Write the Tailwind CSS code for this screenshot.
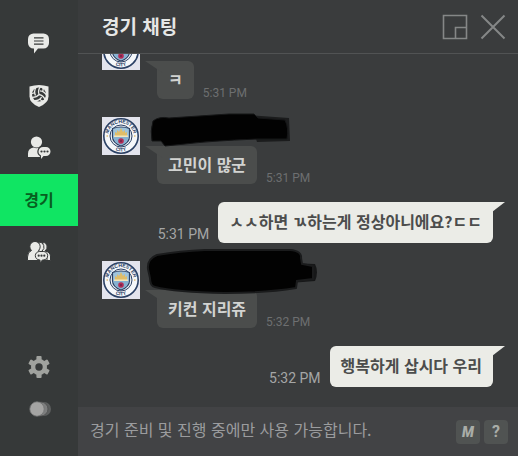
<!DOCTYPE html>
<html lang="ko">
<head>
  <meta charset="UTF-8" />
  <meta name="viewport" content="width=device-width, initial-scale=1.0"/>
  <title>경기 채팅</title>
  <script src="https://cdn.jsdelivr.net/npm/@tailwindcss/browser@4"></script>
</head>
<body class="h-screen flex overflow-hidden bg-[#3a3c3d] font-['Noto_Sans_CJK_KR',sans-serif] text-base">

  <!-- 공용 심볼 -->
  <svg class="hidden" aria-hidden="true">
    <defs>
      <path id="crestTop" d="M6.2 19a12.8 12.8 0 0 1 25.6 0" />
      <path id="crestBottom" d="M3.6 19a15.4 15.4 0 0 0 30.8 0" />
      <symbol id="crest" viewBox="0 0 38 38">
        <rect width="38" height="38" fill="#e3e4ed" />
        <circle cx="19" cy="19" r="17.2" fill="#f5f7fa" stroke="#2b4165" stroke-width="1.6" />
        <circle cx="19" cy="19" r="11" fill="#f2f5f8" stroke="#2b4165" stroke-width="1" />
        <text font-size="5" font-weight="700" fill="#2b4165" text-anchor="middle" font-family="Liberation Sans"><textPath href="#crestTop" startOffset="50%">MANCHESTER</textPath></text>
        <text font-size="5" font-weight="700" fill="#2b4165" text-anchor="middle" font-family="Liberation Sans"><textPath href="#crestBottom" startOffset="50%">CITY</textPath></text>
        <path d="M10.500 11.500q8.500-3 17 0v8q0 6.500-8.500 9.500q-8.500-3-8.500-9.500z" fill="#9fc4dc" stroke="#2b4165" stroke-width="1.200" />
        <path d="M11.500 20h15q0 5-7.500 8q-7.500-3-7.500-8z" fill="#86b1d1" />
        <path d="M13 19v-4l2 1v-3l2 2l2-4l2 4l2-2v3l2-1v4z" fill="#e0bd68" />
        <path d="M12 18.500h14v1.500h-14z" fill="#f3e6bd" />
        <circle cx="19" cy="24" r="2.800" fill="#b12c55" />
        <circle cx="19" cy="24" r="1" fill="#6e2348" />
        <circle cx="5.200" cy="19" r=".8" fill="#d6ac4b" />
        <circle cx="32.800" cy="19" r=".8" fill="#d6ac4b" />
      </symbol>
    </defs>
  </svg>

  <!-- 사이드 메뉴 -->
  <nav class="w-[78px] shrink-0 flex flex-col justify-between bg-[#363939] pt-[18px] pb-[26px] text-[#e9eae7]">
    <div class="flex flex-col">
      <button class="h-[52px] flex items-center justify-center" aria-label="전체 채팅">
        <svg class="size-6" viewBox="0 0 24 24">
          <path d="M6.500 1.500h10a5.500 5.500 0 0 1 5.500 5.500v4a5.500 5.500 0 0 1-5.500 5.500h-5.500l-4 5v-5h-.5a5.500 5.500 0 0 1-5.500-5.500V7a5.500 5.500 0 0 1 5.500-5.500z" fill="currentColor" />
          <path d="M7 5.800h9.500M7 9h9.500M7 12.200h9.500" stroke="#363939" stroke-width="1.200" />
        </svg>
      </button>
      <button class="h-[52px] flex items-center justify-center" aria-label="클럽 채팅">
        <svg class="size-6" viewBox="0 0 24 24">
          <path d="M2.500 2.500q9.500-3 19 0v10q0 6.500-9.500 10.500q-9.500-4-9.500-10.500z" fill="currentColor" />
          <circle cx="12" cy="10.500" r="7" fill="#363939" />
          <g fill="none" stroke="currentColor" stroke-width="1.300">
            <path d="M12 10.500q-1.500-4 1.500-8M8.500 11.500q-2-4 .5-8M15.500 7.500q1-1.500.500-4" />
            <path d="M12 10.500q-1.500-4 1.500-8M8.500 11.500q-2-4 .5-8M15.500 7.500q1-1.500.500-4" transform="rotate(120 12 10.500)" />
            <path d="M12 10.500q-1.500-4 1.500-8M8.500 11.500q-2-4 .5-8M15.500 7.500q1-1.500.500-4" transform="rotate(240 12 10.500)" />
          </g>
        </svg>
      </button>
      <button class="h-[52px] flex items-center justify-center" aria-label="친구 채팅">
        <svg class="size-6" viewBox="0 0 24 24">
          <circle cx="9.500" cy="6" r="5.600" fill="currentColor" />
          <path d="M1 21v-3.500q0-5 5.500-6q3 1.500 6 0q5 1 5.500 5v4.500z" fill="currentColor" />
          <path d="M16 11h3a4.500 4.500 0 0 1 0 9h-2.500l-2.500 3v-3.500a4.500 4.500 0 0 1 2-8.500z" fill="currentColor" stroke="#363939" stroke-width="2.400" />
          <path d="M16 11h3a4.500 4.500 0 0 1 0 9h-2.500l-2.500 3v-3.500a4.500 4.500 0 0 1 2-8.500z" fill="currentColor" />
          <g fill="#363939"><circle cx="14.500" cy="15.500" r="1.100" /><circle cx="17.500" cy="15.500" r="1.100" /><circle cx="20.500" cy="15.500" r="1.100" /></g>
        </svg>
      </button>
      <button class="h-[52px] flex items-center justify-center bg-[#10e563] pb-[3px] font-bold text-[#075f20]" aria-current="true">경기</button>
      <button class="h-[52px] flex items-center justify-center" aria-label="그룹 채팅">
        <svg class="size-6" viewBox="0 0 24 24">
          <g fill="currentColor" stroke="#363939" stroke-width="1">
            <path d="M16 2a5 5 0 0 1 2 9q5 1 5.500 5v4.500h-9z" />
            <path d="M12 2a5 5 0 0 1 3 9q4 1 5 5v4.500h-9z" />
            <path d="M.5 20.500v-3.500q0-5 4-6.500a5.200 5.200 0 1 1 7 0q4 1 4.500 5v5z" />
            <path d="M12.500 11.500h4a4.200 4.200 0 0 1 0 8.400h-1l-2.500 3v-3h-.5a4.200 4.200 0 0 1 0-8.400z" />
          </g>
          <g fill="#363939"><circle cx="11.700" cy="15.700" r="1.100" /><circle cx="14.500" cy="15.700" r="1.100" /><circle cx="17.300" cy="15.700" r="1.100" /></g>
        </svg>
      </button>
    </div>
    <div class="flex flex-col">
      <button class="h-[42px] flex items-center justify-center text-[#a0a29e]" aria-label="설정">
        <svg class="size-6" viewBox="0 0 24 24">
          <g fill="currentColor">
            <rect x="9.400" y="1" width="5.200" height="22" rx="1" />
            <rect x="9.400" y="1" width="5.200" height="22" rx="1" transform="rotate(60 12 12)" />
            <rect x="9.400" y="1" width="5.200" height="22" rx="1" transform="rotate(120 12 12)" />
            <circle cx="12" cy="12" r="8" />
          </g>
          <circle cx="12" cy="12" r="3.700" fill="#363939" />
        </svg>
      </button>
      <button class="h-[42px] flex items-center justify-center" aria-label="투명도">
        <svg class="size-6" viewBox="0 0 24 24">
          <circle cx="17" cy="12" r="7" fill="#5d5f5f" />
          <circle cx="14" cy="12" r="7" fill="#7d7e7e" stroke="#4b4d4d" stroke-width=".8" />
          <circle cx="10" cy="12" r="7.200" fill="#a4a4a3" stroke="#727373" stroke-width=".8" />
        </svg>
      </button>
    </div>
  </nav>

  <!-- 채팅 패널 -->
  <main class="flex-1 min-w-0 flex flex-col">
    <header class="h-[54px] shrink-0 flex items-center justify-between border-b border-[#515354] pl-6 pr-3">
      <h1 class="text-[19px] font-bold text-[#e6e7e6]">경기 채팅</h1>
      <div class="flex gap-3 text-[#858787]">
        <button aria-label="작게 보기">
          <svg class="size-[26px]" viewBox="0 0 26 26" fill="none" stroke="currentColor" stroke-width="1.600">
            <path d="M1.500 1.500h23v23h-23zM13.500 24.500v-11h11" />
          </svg>
        </button>
        <button aria-label="닫기">
          <svg class="size-[26px]" viewBox="0 0 26 26" fill="none" stroke="currentColor" stroke-width="2">
            <path d="M1.500 1.500l23 23M24.500 1.500l-23 23" />
          </svg>
        </button>
      </div>
    </header>

    <section class="flex-1 min-h-0 overflow-hidden flex flex-col justify-end gap-[18px] pl-6 pr-[25px] pb-5">
      <div class="shrink-0 flex items-start gap-[17px]">
        <svg class="size-[38px] shrink-0"><use href="#crest" /></svg>
        <div class="flex items-end gap-[9px] pt-[29px]">
          <div class="relative h-[38px] flex items-center rounded-md bg-[#4b4d4c] px-[11px] pb-[3px] font-bold text-[#d2d3d1]">
            <svg class="absolute top-0 -left-3 w-[18px] h-3" viewBox="0 0 18 12"><path d="M0 0h18v12z" fill="#4b4d4c" /></svg>
            <p class="relative">ㅋ</p>
          </div>
          <time class="font-[Roboto] text-xs leading-3 text-[#6d6f70]">5:31 PM</time>
        </div>
      </div>

      <div class="shrink-0 flex items-start gap-[17px]">
        <svg class="size-[38px] shrink-0"><use href="#crest" /></svg>
        <div class="relative flex items-end gap-[9px] pt-[29px]">
          <div class="relative h-[38px] flex items-center rounded-md bg-[#4b4d4c] px-[11px] pb-[3px] font-bold text-[#d2d3d1]">
            <svg class="absolute top-0 -left-3 w-[18px] h-3" viewBox="0 0 18 12"><path d="M0 0h18v12z" fill="#4b4d4c" /></svg>
            <p class="relative">고민이 많군</p>
          </div>
          <time class="font-[Roboto] text-xs leading-3 text-[#6d6f70]">5:31 PM</time>
          <!-- 가려진 닉네임 -->
          <svg class="absolute -top-1 -left-2 w-[144px] h-[34px]" viewBox="0 0 144 34">
            <path d="M100 2L140 5L141 28L108 29Z" fill="#1b1c1d" />
            <path d="M4 8Q10 3 20 5L80 1L105 1L109 5L136 7Q140 15 138 26L108 26Q60 28 36 31L16 33L12 28L3 28Q1 18 4 8Z" fill="#020202" stroke="#151617" />
          </svg>
        </div>
      </div>

      <div class="shrink-0 flex items-end justify-end gap-[9px]">
        <time class="font-[Roboto] text-sm leading-[18px] text-[#a5a6a6]">5:31 PM</time>
        <div class="relative h-[41px] flex items-center rounded-md bg-[#ebece7] px-[11px] pb-[3px] font-bold text-[#4c4d4c]">
          <svg class="absolute top-0 -right-3 w-[18px] h-3" viewBox="0 0 18 12"><path d="M0 0h18L5 10H0z" fill="#ebece7" /></svg>
          <p class="relative">ㅅㅅ하면 ㄳ하는게 정상아니에요?ㄷㄷ</p>
        </div>
      </div>

      <div class="shrink-0 flex items-start gap-[17px]">
        <svg class="size-[38px] shrink-0"><use href="#crest" /></svg>
        <div class="relative flex items-end gap-[9px] pt-[29px]">
          <div class="relative h-[38px] flex items-center rounded-md bg-[#4b4d4c] px-[11px] pb-[3px] font-bold text-[#d2d3d1]">
            <svg class="absolute top-0 -left-3 w-[18px] h-3" viewBox="0 0 18 12"><path d="M0 0h18v12z" fill="#4b4d4c" /></svg>
            <p class="relative">키컨 지리쥬</p>
          </div>
          <time class="font-[Roboto] text-xs leading-3 text-[#6d6f70]">5:32 PM</time>
          <!-- 가려진 닉네임 -->
          <svg class="absolute -top-3.5 -left-3 w-[174px] h-12" viewBox="0 0 174 48">
            <path d="M145 16L170 17Q174 25 170 34L145 36Z" fill="#161718" />
            <path d="M3 22Q2 12 12 8Q35 4 60 3L145 3Q157 4 156 11L157 17L168 19L168 32L152 34L151 41Q120 46 80 46Q30 45 10 40Q5 39 5 31Z" fill="#020202" stroke="#1a1b1c" stroke-width="2" />
          </svg>
        </div>
      </div>

      <div class="shrink-0 flex items-end justify-end gap-[9px]">
        <time class="font-[Roboto] text-sm leading-[18px] text-[#a5a6a6]">5:32 PM</time>
        <div class="relative h-[41px] flex items-center rounded-md bg-[#ebece7] px-[11px] pb-[3px] font-bold text-[#4c4d4c]">
          <svg class="absolute top-0 -right-3 w-[18px] h-3" viewBox="0 0 18 12"><path d="M0 0h18L5 10H0z" fill="#ebece7" /></svg>
          <p class="relative">행복하게 삽시다 우리</p>
        </div>
      </div>
    </section>

    <footer class="h-[49px] shrink-0 flex items-center gap-1 bg-[#424345] pl-3 pr-2.5">
      <input type="text" disabled aria-label="메시지 입력" placeholder="경기 준비 및 진행 중에만 사용 가능합니다." class="flex-1 min-w-0 bg-transparent pb-[5px] placeholder:text-[#9b9c9e]" />
      <button class="size-6 rounded bg-[#505352] text-sm font-black italic text-[#a9ada8] font-[Roboto]" aria-label="매크로">M</button>
      <button class="size-6 rounded bg-[#505352] text-base leading-6 font-bold text-[#a9ada8] font-[Roboto]" aria-label="도움말">?</button>
    </footer>
  </main>

</body>
</html>
